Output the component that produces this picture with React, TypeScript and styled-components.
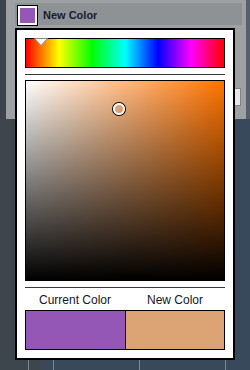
import React from "react";
import styled, { createGlobalStyle } from "styled-components";

const GlobalStyle = createGlobalStyle`
  html, body { margin: 0; padding: 0; background: #3c444c; }
  body { font-family: "Liberation Sans", Arial, sans-serif; }
  * { box-sizing: border-box; }
`;

const HUE = 27;
const SAT = 0.47;
const VAL = 0.86;

const Page = styled.div`
  position: relative;
  width: 250px;
  height: 370px;
  display: flex;
  flex-direction: column;
  overflow: hidden;
  background: #3c444c;
`;

const TopArea = styled.div`
  height: 119px;
  display: flex;
`;

const Edge = styled.div<{ $w: number; $bg: string }>`
  width: ${(p) => p.$w}px;
  background: ${(p) => p.$bg};
`;

const Panel = styled.div`
  flex: 1;
  background: #9da1a4;
  padding: 3px 4px 0 9px;
  display: flex;
  flex-direction: column;
`;

const HeaderRow = styled.div`
  height: 22px;
  background: #8e9295;
  display: flex;
  align-items: flex-start;
  padding: 2px 0 0 2px;
`;

const HeaderSwatch = styled.div<{ $color: string }>`
  width: 21px;
  height: 21px;
  border: 1px solid #000;
  padding: 2px;
  background: #fff;
  flex: none;
  &::after {
    content: "";
    display: block;
    width: 100%;
    height: 100%;
    background: ${(p) => p.$color};
  }
`;

const Title = styled.span`
  margin-left: 5px;
  margin-top: 3px;
  font-size: 11px;
  font-weight: bold;
  color: #16202c;
  line-height: 14px;
`;

const SideRow = styled.div`
  display: flex;
  justify-content: flex-end;
  margin-top: 63px;
  padding-right: 1px;
`;

const SideBox = styled.div`
  width: 30px;
  height: 18px;
  background: #e6e8e9;
  border: 1px solid #7e8489;
`;

const BottomArea = styled.div`
  flex: 1;
  display: flex;
`;

const Col = styled.div<{ $w?: number; $bg: string; $line?: boolean }>`
  ${(p) => (p.$w ? `width: ${p.$w}px;` : "flex: 1;")}
  background: ${(p) => p.$bg};
  ${(p) => (p.$line ? "border-left: 1px solid #7d8894;" : "")}
`;

const Popup = styled.div`
  position: absolute;
  left: 15px;
  top: 28px;
  width: 220px;
  height: 332px;
  border: 2px solid #000;
  background: #fff;
  padding: 8px;
  display: flex;
  flex-direction: column;
`;

const HueBar = styled.div`
  position: relative;
  height: 30px;
  border: 1px solid #000;
  background: linear-gradient(
    to right,
    #ff0000,
    #ffff00,
    #00ff00,
    #00ffff,
    #0000ff,
    #ff00ff,
    #ff0000
  );
`;

const HueMarker = styled.svg`
  position: absolute;
  top: -1px;
  width: 14px;
  height: 8px;
  transform: translateX(-50%);
`;

const Divider = styled.div<{ $top: number; $bottom: number }>`
  height: 1px;
  background: #3a3a3a;
  margin: ${(p) => p.$top}px 0 ${(p) => p.$bottom}px;
`;

const SVBox = styled.div<{ $hue: number }>`
  position: relative;
  height: 201px;
  border: 1px solid #000;
  background: linear-gradient(to top, #000, rgba(0, 0, 0, 0)),
    linear-gradient(to right, #fff, hsl(${(p) => p.$hue}, 100%, 50%));
`;

const Picker = styled.div`
  position: absolute;
  width: 12px;
  height: 12px;
  border-radius: 50%;
  border: 2px solid #fff;
  box-shadow: 0 0 0 1px #000;
  transform: translate(-50%, -50%);
`;

const Labels = styled.div`
  display: grid;
  grid-template-columns: 1fr 1fr;
  height: 22px;
  align-items: center;
`;

const Label = styled.span`
  text-align: center;
  font-size: 12px;
  color: #14142a;
  line-height: 14px;
  padding-top: 1px;
`;

const Swatches = styled.div`
  display: grid;
  grid-template-columns: 1fr 1fr;
  height: 40px;
  border: 1px solid #000;
`;

const ColorBlock = styled.div<{ $color: string; $divider?: boolean }>`
  background: ${(p) => p.$color};
  ${(p) => (p.$divider ? "border-left: 1px solid #000;" : "")}
`;

export default function App() {
  const huePct = (HUE / 360) * 100;
  return (
    <>
      <GlobalStyle />
      <Page>
        <TopArea>
          <Edge $w={6} $bg="#3c434b" />
          <Panel>
            <HeaderRow>
              <HeaderSwatch $color="#9457b5" />
              <Title>New Color</Title>
            </HeaderRow>
            <SideRow>
              <SideBox />
            </SideRow>
          </Panel>
          <Edge $w={4} $bg="#55606b" />
        </TopArea>
        <BottomArea>
          <Col $w={28} $bg="#3d454d" />
          <Col $w={13} $bg="#3d454d" $line />
          <Col $w={12} $bg="#3a4959" />
          <Col $w={86} $bg="#3a4959" $line />
          <Col $w={86} $bg="#3a4959" $line />
          <Col $bg="#38495c" $line />
        </BottomArea>
        <Popup>
          <HueBar>
            <HueMarker viewBox="0 0 14 8" style={{ left: `${huePct}%` }}>
              <polygon points="0.5,0.5 13.5,0.5 7,7.5" fill="#fff" stroke="#8a8a8a" strokeWidth="1" />
            </HueMarker>
          </HueBar>
          <Divider $top={6} $bottom={5} />
          <SVBox $hue={HUE}>
            <Picker style={{ left: `${SAT * 100}%`, top: `${(1 - VAL) * 100}%` }} />
          </SVBox>
          <Divider $top={6} $bottom={0} />
          <Labels>
            <Label>Current Color</Label>
            <Label>New Color</Label>
          </Labels>
          <Swatches>
            <ColorBlock $color="#9457b5" />
            <ColorBlock $color="#dca374" $divider />
          </Swatches>
        </Popup>
      </Page>
    </>
  );
}
